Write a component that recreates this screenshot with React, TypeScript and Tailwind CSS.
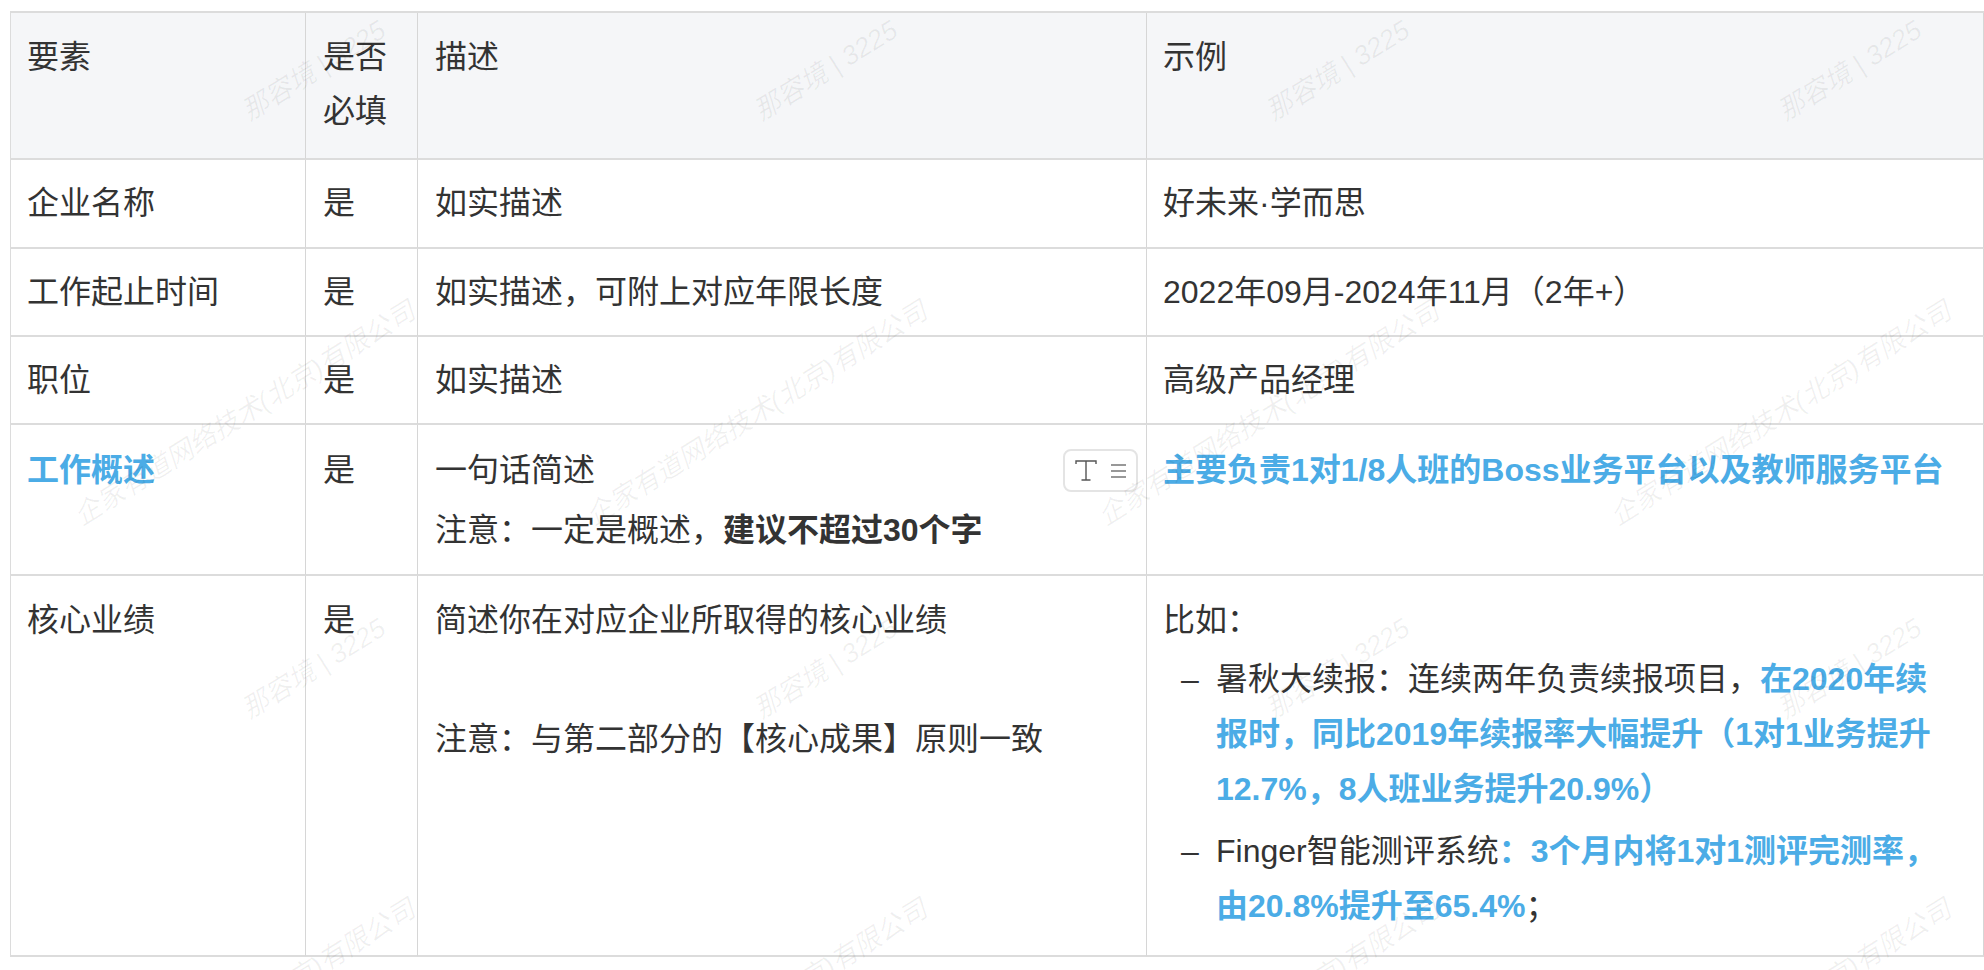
import React from "react";

const FONT = "font-['Liberation_Sans','Noto_Sans_CJK_SC',sans-serif]";
const cell = "relative border-r border-b-2 border-r-[#d6d6d6] border-b-[#dcdcdc] px-[16px] pt-[17px] pb-0 align-top font-normal text-left";
const blue = "font-bold text-[#4bace6]";

const Dash = () => <span className="w-[35px] shrink-0">–</span>;

const marks: { text: string; x: number; y: number }[] = [];
for (const col of [0, 1, 2, 3]) {
  for (const row of [0, 1]) {
    marks.push({ text: "那容境 | 3225", x: 314 + col * 512, y: 71 + row * 598 });
    marks.push({ text: "企家有道网络技术(北京)有限公司", x: 245 + col * 512, y: 414 + row * 598 });
  }
}

const FormatButton = () => (
  <div className="absolute right-[8px] top-[24px] flex h-[43px] w-[75px] items-center justify-center gap-[14px] rounded-[8px] border-2 border-[#e4e4e4] bg-white">
    <svg width="22" height="21" viewBox="0 0 22 21" fill="none" stroke="#555" strokeWidth="1.4">
      <path d="M1 4V1h20v3M11 1v19M6.5 20h9" />
    </svg>
    <svg width="15" height="16" viewBox="0 0 15 16" fill="none" stroke="#777" strokeWidth="1.6">
      <path d="M0 2h15M0 8h15M0 14h15" />
    </svg>
  </div>
);

export default function App() {
  return (
    <div className={`relative h-[970px] overflow-hidden bg-white pl-[10px] pt-[11px] text-[32px] leading-[54px] text-[#333] ${FONT}`}>
      <table className="w-[1974px] table-fixed border-separate border-spacing-0 border-l border-t-2 border-[#dcdcdc] [&_tr>*:nth-child(2)]:pl-[17px] [&_tr>*:nth-child(3)]:pl-[17px]">
        <colgroup>
          <col className="w-[295px]" />
          <col className="w-[112px]" />
          <col className="w-[729px]" />
          <col />
        </colgroup>
        <thead>
          <tr className="h-[147px] bg-[#f5f6f8]">
            <th className={cell}>要素</th>
            <th className={cell}>是否<br />必填</th>
            <th className={cell}>描述</th>
            <th className={cell}>示例</th>
          </tr>
        </thead>
        <tbody className="[&>tr:nth-child(-n+3)>td]:pt-[16px] [&>tr:nth-child(4)>td]:pt-[18px]">
          <tr className="h-[89px]">
            <td className={cell}>企业名称</td>
            <td className={cell}>是</td>
            <td className={cell}>如实描述</td>
            <td className={cell}>好未来·学而思</td>
          </tr>
          <tr className="h-[88px]">
            <td className={cell}>工作起止时间</td>
            <td className={cell}>是</td>
            <td className={cell}>如实描述，可附上对应年限长度</td>
            <td className={cell}>2022年09月-2024年11月（2年+）</td>
          </tr>
          <tr className="h-[88px]">
            <td className={cell}>职位</td>
            <td className={cell}>是</td>
            <td className={cell}>如实描述</td>
            <td className={cell}>高级产品经理</td>
          </tr>
          <tr className="h-[151px]">
            <td className={cell}><span className={blue}>工作概述</span></td>
            <td className={cell}>是</td>
            <td className={cell}>
              <p>一句话简述</p>
              <p className="mt-[6px]">注意：一定是概述，<strong>建议不超过30个字</strong></p>
              <FormatButton />
            </td>
            <td className={cell}><span className={blue}>主要负责1对1/8人班的Boss业务平台以及教师服务平台</span></td>
          </tr>
          <tr className="h-[381px]">
            <td className={cell}>核心业绩</td>
            <td className={cell}>是</td>
            <td className={cell}>
              <p>简述你在对应企业所取得的核心业绩</p>
              <p className="mt-[5px] h-[54px]" />
              <p className="mt-[6px]">注意：与第二部分的【核心成果】原则一致</p>
            </td>
            <td className={cell}>
              <p>比如：</p>
              <ul className="mt-[5px] pl-[18px] pr-[24px] leading-[55px]">
                <li className="flex">
                  <Dash />
                  <div>
                    暑秋大续报：连续两年负责续报项目，<span className={blue}>在2020年续报时，同比2019年续报率大幅提升（1对1业务提升12.7%，8人班业务提升20.9%）</span>
                  </div>
                </li>
                <li className="mt-[7px] flex">
                  <Dash />
                  <div>
                    Finger智能测评系统<span className={blue}>：3个月内将1对1测评完测率，由20.8%提升至65.4%</span>；
                  </div>
                </li>
              </ul>
            </td>
          </tr>
        </tbody>
      </table>
      <div className="pointer-events-none absolute inset-0 overflow-hidden">
        {marks.map((m) => (
          <span
            key={m.text + m.x + m.y}
            className="absolute -translate-x-1/2 -translate-y-1/2 -rotate-[32deg] whitespace-nowrap text-[27px] italic leading-none text-black/[0.06]"
            style={{ left: m.x, top: m.y }}
          >
            {m.text}
          </span>
        ))}
      </div>
    </div>
  );
}
